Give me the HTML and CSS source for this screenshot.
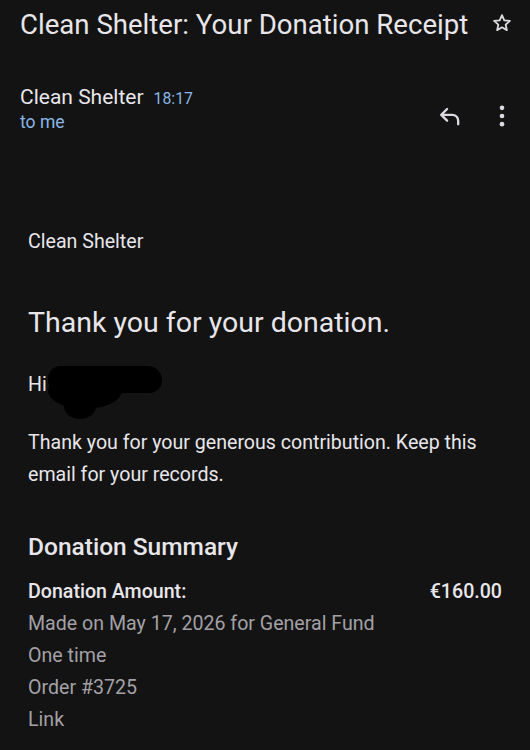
FILE: index.html
```html
<!DOCTYPE html>
<html lang="en">
<head>
    <meta charset="UTF-8">
    <meta name="viewport" content="width=device-width, initial-scale=1.0">
    <title>Clean Shelter: Your Donation Receipt</title>
    <link rel="stylesheet" href="styles.css">
</head>
<body>

    <div class="subject">
        <h1>Clean Shelter: Your Donation Receipt</h1>
        <svg class="star" width="22" height="22" viewBox="0 0 24 24">
            <path d="M12 3.5l2.5 5.6 6.1.6-4.6 4.1 1.3 6L12 16.7l-5.3 3.1 1.3-6-4.6-4.1 6.1-.6z" fill="none" stroke="#dcd9e0" stroke-width="2" stroke-linejoin="round"/>
        </svg>
    </div>

    <div class="sender">
        <div class="sender-info">
            <div><span class="sender-name">Clean Shelter</span><span class="time">18:17</span></div>
            <div class="to">to me</div>
        </div>
        <div class="actions">
            <svg width="28" height="28" viewBox="0 0 24 24">
                <path d="M9.5 6L4.5 11l5 5" fill="none" stroke="#dcd9e0" stroke-width="2" stroke-linecap="round" stroke-linejoin="round"/>
                <path d="M5 11h9a5 5 0 0 1 5 5v3" fill="none" stroke="#dcd9e0" stroke-width="2" stroke-linecap="round"/>
            </svg>
            <svg width="28" height="28" viewBox="0 0 24 24">
                <circle cx="12" cy="5" r="2" fill="#dcd9e0"/>
                <circle cx="12" cy="12" r="2" fill="#dcd9e0"/>
                <circle cx="12" cy="19" r="2" fill="#dcd9e0"/>
            </svg>
        </div>
    </div>

    <div class="mail">
        <p class="org">Clean Shelter</p>
        <h2>Thank you for your donation.</h2>
        <p class="hi">Hi <span class="redact"></span></p>
        <p class="text">Thank you for your generous contribution. Keep this email for your records.</p>

        <h3>Donation Summary</h3>
        <div class="amount">
            <span>Donation Amount:</span>
            <span>€160.00</span>
        </div>
        <p class="detail">Made on May 17, 2026 for General Fund</p>
        <p class="detail">One time</p>
        <p class="detail">Order #3725</p>
        <p class="detail">Link</p>
    </div>

</body>
</html>
```

FILE: styles.css
```css
body {
    font-family: Roboto, "Noto Sans", sans-serif;
    background-color: #131313;
    color: #e8e6ea;
    margin: 0;
    padding: 0 20px;
}

.subject {
    display: flex;
    justify-content: space-between;
    align-items: flex-start;
    padding-top: 8px;
}

h1 {
    font-size: 27.6px;
    font-weight: 400;
    margin: 0;
    line-height: 34px;
}

.star {
    margin-top: 4px;
    margin-right: -3px;
}

.sender {
    display: flex;
    justify-content: space-between;
    align-items: center;
    margin-top: 43px;
}

.sender-name {
    font-size: 21px;
}

.time {
    font-size: 15.8px;
    color: #8ab8e6;
    margin-left: 10px;
}

.to {
    font-size: 17.5px;
    color: #8ab8e6;
    margin-top: 3px;
}

.actions {
    display: flex;
    gap: 24px;
    margin-top: 14px;
    margin-right: -6px;
}

.mail {
    padding: 0 8px;
    margin-top: 94px;
}

.mail p {
    margin: 0;
    font-size: 19.6px;
    line-height: 32px;
}

h2 {
    font-size: 28.5px;
    font-weight: 400;
    margin: 48px 0 30px 0;
}

.hi {
    position: relative;
}

/* geschwärzter Name */
.redact {
    position: absolute;
    left: 20px;
    top: -3px;
    width: 114px;
    height: 27px;
    background-color: #000;
    border-radius: 14px 16px 14px 14px;
}

.redact::before,
.redact::after {
    content: "";
    position: absolute;
    background-color: #000;
    border-radius: 50%;
}

.redact::before {
    left: 0;
    top: 6px;
    width: 74px;
    height: 37px;
}

.redact::after {
    left: 16px;
    top: 27px;
    width: 32px;
    height: 26px;
}

.mail .text {
    margin-top: 26px;
}

h3 {
    font-size: 24.5px;
    font-weight: 500;
    margin: 41px 0 15px 0;
}

.amount {
    display: flex;
    justify-content: space-between;
    font-size: 19.6px;
    font-weight: 500;
    line-height: 32px;
}

.mail .detail {
    color: #a3a1a6;
}
```
